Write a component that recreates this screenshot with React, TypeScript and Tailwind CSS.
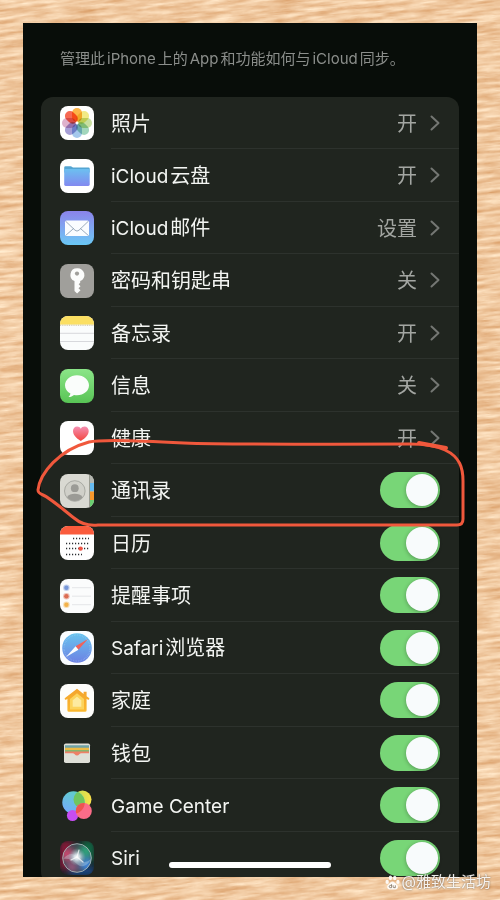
import { Fragment, useState } from 'react'
import type { ReactNode } from 'react'

interface Item {
  id: string
  label: string
  icon: ReactNode
  value?: string
}

function Svg({ children }: { children: ReactNode }) {
  return (
    <svg viewBox="0 0 34 34" className="size-full" aria-hidden="true">
      {children}
    </svg>
  )
}

function Tile({ className = '', children }: { className?: string; children: ReactNode }) {
  return <div className={`size-[34px] shrink-0 overflow-hidden rounded-lg ${className}`}>{children}</div>
}

const petals = ['#fdb548', '#f2ea86', '#c9dfa0', '#a2d6bc', '#a4c8ec', '#a79fd6', '#dfb2cc', '#f66a54']

function PhotosIcon() {
  return (
    <Tile className="bg-white">
      <Svg>
        <g className="isolate">
          {petals.map((color, i) => (
            <rect
              key={color}
              x="12"
              y="2"
              width="10"
              height="14"
              rx="5"
              fill={color}
              transform={`rotate(${i * 45} 17 17)`}
              className="mix-blend-multiply"
            />
          ))}
        </g>
        <circle cx="17" cy="17" r="1.4" fill="#fff" opacity=".85" />
      </Svg>
    </Tile>
  )
}

function DriveIcon() {
  return (
    <Tile className="bg-white">
      <Svg>
        <defs>
          <linearGradient id="folder" x1="0" y1="0" x2="0" y2="1">
            <stop offset="0" stopColor="#6cc0f0" />
            <stop offset="1" stopColor="#8289f0" />
          </linearGradient>
        </defs>
        <path d="M4.2 8.6q0-1.4 1.4-1.4h5q.8 0 1.3.6t1.3.6h15.3q1.2 0 1.2 1.2v4H4.2z" fill="#54a5d2" />
        <rect x="4.2" y="10" width="25.5" height="17" rx="1.4" fill="url(#folder)" />
      </Svg>
    </Tile>
  )
}

function MailIcon() {
  return (
    <Tile className="bg-linear-to-b from-[#8a83ea] to-[#69c8f5]">
      <Svg>
        <rect x="5" y="9.6" width="24" height="15.4" rx="1.6" fill="#fafcff" />
        <path
          d="M5.6 10.2 15 19.2q2 1.8 4 0l9.4-9M5.6 24.5l8.2-7.2M28.4 24.5l-8.2-7.2"
          fill="none"
          stroke="#8fa0b4"
          strokeWidth=".9"
        />
      </Svg>
    </Tile>
  )
}

function KeyIcon() {
  return (
    <Tile className="bg-[#a09f9b]">
      <Svg>
        <path
          d="M17 4.3a6.6 6.6 0 0 0-2.5 12.7v10l2.6 2.6 3.4-3.3-2-2 2-2.1-1.8-1.9 1.5-1.5V17A6.6 6.6 0 0 0 17 4.3z"
          fill="#fbfcfb"
        />
        <circle cx="17" cy="9.6" r="2.1" fill="#a09f9b" />
      </Svg>
    </Tile>
  )
}

function NotesIcon() {
  return (
    <Tile className="bg-[#fafcfc]">
      <Svg>
        <rect width="34" height="8.6" fill="#fbdf62" />
        <path d="M0 9.2h34" stroke="#c9bd98" strokeWidth="1" strokeDasharray="1 .8" />
        <path d="M0 17.3h34M0 25.5h34" stroke="#d2d4d8" strokeWidth=".9" />
      </Svg>
    </Tile>
  )
}

function MessagesIcon() {
  return (
    <Tile className="bg-linear-to-b from-[#8be588] to-[#58c455]">
      <Svg>
        <path
          d="M17 6.2c-6.8 0-12 4.5-12 10.1 0 3.6 2 6.5 5.4 8.3-.2 1.5-1 2.6-1.9 3.5 2.2-.1 4.1-.9 5.5-2.1 1 .2 2 .3 3 .3 6.8 0 12-4.4 12-10S23.8 6.2 17 6.2z"
          fill="#fafdfb"
        />
      </Svg>
    </Tile>
  )
}

function HealthIcon() {
  return (
    <Tile className="bg-white">
      <Svg>
        <defs>
          <linearGradient id="heart" x1="0" y1="0" x2="0" y2="1">
            <stop offset="0" stopColor="#f58fb2" />
            <stop offset="1" stopColor="#f2463f" />
          </linearGradient>
        </defs>
        <path
          d="M20.8 19.9C16 17.1 13 13.7 13 10c0-2.7 1.9-4.5 4.1-4.5 1.7 0 3 .9 3.7 2.3.7-1.4 2-2.3 3.7-2.3 2.3 0 4.2 1.8 4.2 4.5 0 3.7-3 7.1-7.9 9.9z"
          fill="url(#heart)"
        />
      </Svg>
    </Tile>
  )
}

function ContactsIcon() {
  return (
    <Tile className="bg-[#d9d9d2]">
      <Svg>
        <rect x="29" width="1" height="34" fill="#9a9c92" />
        <rect x="30" width="4" height="9" fill="#b5b7b0" />
        <rect x="30" y="9" width="4" height="8.5" fill="#66baf0" />
        <rect x="30" y="17.5" width="4" height="8.5" fill="#f7982d" />
        <rect x="30" y="26" width="4" height="8" fill="#6cd071" />
        <circle cx="14.8" cy="17" r="10.3" fill="#d0d0c9" stroke="#9d9e98" strokeWidth=".8" />
        <circle cx="14.8" cy="14.2" r="3.9" fill="#9b9b96" />
        <path d="M7 23.2c1.6-2.6 4.5-3.5 7.8-3.5s6.2.9 7.8 3.5a10 10 0 0 1-15.6 0z" fill="#9b9b96" />
      </Svg>
    </Tile>
  )
}

function CalendarIcon() {
  return (
    <Tile className="bg-white">
      <Svg>
        <rect width="34" height="8.5" fill="#fa5b3c" />
        <path
          d="M13 12.5h16M6 17.5h23M6 22.5h23M6 28.5h16"
          fill="none"
          stroke="#2b2e32"
          strokeWidth="1.3"
          strokeDasharray="1.2 1.8"
        />
        <circle cx="20.6" cy="22.6" r="2.2" fill="#ef5444" />
      </Svg>
    </Tile>
  )
}

function RemindersIcon() {
  return (
    <Tile className="bg-[#fbfcfc]">
      <Svg>
        <path d="M12 8.7h19M12 17.2h19M12 25.7h19" stroke="#dedfe2" strokeWidth=".8" />
        {[
          ['8.7', '#7797d8'],
          ['17.2', '#dc6c52'],
          ['25.7', '#f3b24a'],
        ].map(([cy, color]) => (
          <g key={color} fill={color}>
            <circle cx="6.4" cy={cy} r="3.3" opacity=".4" />
            <circle cx="6.4" cy={cy} r="2.2" />
          </g>
        ))}
      </Svg>
    </Tile>
  )
}

function SafariIcon() {
  return (
    <Tile className="bg-[#fafdff]">
      <Svg>
        <defs>
          <linearGradient id="compass" x1="0" y1="0" x2="0" y2="1">
            <stop offset="0" stopColor="#68c4ee" />
            <stop offset="1" stopColor="#6d82e4" />
          </linearGradient>
        </defs>
        <circle cx="17" cy="17" r="14.8" fill="url(#compass)" />
        <circle cx="17" cy="17" r="13" fill="none" stroke="#b9dcf7" strokeWidth="1.4" strokeDasharray=".4 1.3" opacity=".6" />
        <path d="M28 8 15.6 15.2l2.8 3.6z" fill="#f0625c" />
        <path d="M6 26l9.6-10.8 2.8 3.6z" fill="#fbfdff" />
      </Svg>
    </Tile>
  )
}

function HomeIcon() {
  return (
    <Tile className="bg-[#fdfdfb]">
      <Svg>
        <defs>
          <linearGradient id="house" x1="0" y1="0" x2="0" y2="1">
            <stop offset="0" stopColor="#f3a32e" />
            <stop offset="1" stopColor="#fbb92f" />
          </linearGradient>
        </defs>
        <path
          d="M17 4.8 5 14.1q-.8.8 0 1.4.7.5 1.4 0l1-.7v11.4q0 1.6 1.6 1.6h16q1.6 0 1.6-1.6V14.8l1 .7q.7.5 1.4 0 .8-.7 0-1.4l-2.4-1.9V7.8h-3v2.1z"
          fill="url(#house)"
        />
        <path d="M17 9.3 10 15v10.5h14V15z" fill="#fcd35c" />
        <path d="M17 12.7 12.7 16.3v6.4h8.6v-6.4z" fill="#fdeaa0" />
      </Svg>
    </Tile>
  )
}

function WalletIcon() {
  return (
    <Tile>
      <Svg>
        <rect x="4" y="7.5" width="26" height="19.5" rx="1.8" fill="#dfe0d8" />
        <path d="M5 9.2h24v2.8H5z" fill="#6fa3a6" />
        <path d="M5 11.8h24v2.4H5z" fill="#edbb45" />
        <path d="M5 14h24v2H5z" fill="#86b56f" />
        <path d="M5 15.6h24v1.6h-7.6q-1.4 0-2.1 1.1-.9 1.3-2.3 1.3t-2.3-1.3q-.7-1.1-2.1-1.1H5z" fill="#ee8067" />
      </Svg>
    </Tile>
  )
}

function GameCenterIcon() {
  return (
    <Tile>
      <Svg>
        <defs>
          <linearGradient id="bubble-blue" x1=".7" y1="0" x2=".3" y2="1">
            <stop offset="0" stopColor="#5fcfc8" />
            <stop offset="1" stopColor="#74aafc" />
          </linearGradient>
          <linearGradient id="bubble-yellow" x1="0" y1="0" x2="1" y2="0">
            <stop offset="0" stopColor="#b4dc52" />
            <stop offset="1" stopColor="#fbe14a" />
          </linearGradient>
          <clipPath id="bubble-overlap">
            <circle cx="13.5" cy="13.5" r="11.2" />
          </clipPath>
        </defs>
        <circle cx="22.5" cy="10.5" r="9" fill="url(#bubble-yellow)" />
        <circle cx="13.5" cy="13.5" r="11.2" fill="url(#bubble-blue)" />
        <circle cx="22.5" cy="10.5" r="9" fill="#70c55e" clipPath="url(#bubble-overlap)" />
        <circle cx="12.5" cy="26.5" r="5.6" fill="#c64df2" />
        <circle cx="23.8" cy="22" r="8" fill="#fb6c88" />
        <circle cx="23.8" cy="22" r="8" fill="#ee5450" clipPath="url(#bubble-overlap)" />
      </Svg>
    </Tile>
  )
}

function SiriIcon() {
  return (
    <Tile>
      <Svg>
        <defs>
          <radialGradient id="siri-core">
            <stop offset="0" stopColor="#ffffff" />
            <stop offset=".3" stopColor="#e4f0f6" stopOpacity=".85" />
            <stop offset="1" stopColor="#8fb9c8" stopOpacity="0" />
          </radialGradient>
          <filter id="siri-soft" x="-50%" y="-50%" width="200%" height="200%">
            <feGaussianBlur stdDeviation="3" />
          </filter>
          <clipPath id="siri-orb">
            <circle cx="17" cy="17" r="14.5" />
          </clipPath>
        </defs>
        <rect width="34" height="34" fill="#1d2326" />
        <g filter="url(#siri-soft)">
          <rect x="0" y="0" width="12" height="28" fill="#8b1338" />
          <rect x="22" y="0" width="12" height="20" fill="#0d6b45" />
          <rect x="10" y="26" width="24" height="8" fill="#124a8c" />
        </g>
        <g clipPath="url(#siri-orb)">
          <circle cx="17" cy="17" r="14.5" fill="#3a4650" />
          <g filter="url(#siri-soft)">
            <circle cx="7" cy="13" r="7" fill="#c9486f" />
            <circle cx="26" cy="10" r="7" fill="#2fa57c" />
            <circle cx="27" cy="24" r="7" fill="#4187dc" />
            <circle cx="12" cy="26" r="5" fill="#a85c88" />
          </g>
          <path d="M3 18c6-7 11-6 15-1s8 5 13 1c-4 8-10 9-14 5s-9-6-14-5z" fill="#c9e0e8" opacity=".35" />
        </g>
        <circle cx="17" cy="16" r="9" fill="url(#siri-core)" />
        <path d="M17 16l6 5M17 16l-6 3M17 16l2-7" stroke="#fff" strokeWidth="1.2" strokeLinecap="round" opacity=".7" />
        <circle cx="17" cy="17" r="14.3" fill="none" stroke="#a7b4b4" strokeWidth=".9" />
      </Svg>
    </Tile>
  )
}

const items: Item[] = [
  { id: 'photos', label: '照片', icon: <PhotosIcon />, value: '开' },
  { id: 'drive', label: 'iCloud云盘', icon: <DriveIcon />, value: '开' },
  { id: 'mail', label: 'iCloud邮件', icon: <MailIcon />, value: '设置' },
  { id: 'keychain', label: '密码和钥匙串', icon: <KeyIcon />, value: '关' },
  { id: 'notes', label: '备忘录', icon: <NotesIcon />, value: '开' },
  { id: 'messages', label: '信息', icon: <MessagesIcon />, value: '关' },
  { id: 'health', label: '健康', icon: <HealthIcon />, value: '开' },
  { id: 'contacts', label: '通讯录', icon: <ContactsIcon /> },
  { id: 'calendar', label: '日历', icon: <CalendarIcon /> },
  { id: 'reminders', label: '提醒事项', icon: <RemindersIcon /> },
  { id: 'safari', label: 'Safari浏览器', icon: <SafariIcon /> },
  { id: 'home', label: '家庭', icon: <HomeIcon /> },
  { id: 'wallet', label: '钱包', icon: <WalletIcon /> },
  { id: 'gamecenter', label: 'Game Center', icon: <GameCenterIcon /> },
  { id: 'siri', label: 'Siri', icon: <SiriIcon /> },
]

// Sets Latin words apart from the Chinese characters around them
function MixedText({ text, latinClass }: { text: string; latinClass: string }) {
  return text
    .split(/([A-Za-z][A-Za-z ]*)/)
    .filter(Boolean)
    .map((part, i) =>
      /^[A-Za-z]/.test(part) ? (
        <span key={i} className={latinClass}>
          {part}
        </span>
      ) : (
        <Fragment key={i}>{part}</Fragment>
      ),
    )
}

const rowClass = 'flex h-full w-full items-center gap-[17px] pl-[19px] text-left'
const bodyClass = 'flex h-full flex-1 items-center border-b border-[#2d322d] pr-[19px]'

function RowLabel({ text }: { text: string }) {
  return (
    <span className="flex-1 pt-[2px] text-[#f3f5f2]">
      <MixedText text={text} latinClass="mr-[2px] text-[19px]" />
    </span>
  )
}

function LinkRow({ item }: { item: Item }) {
  return (
    <button type="button" className={rowClass}>
      {item.icon}
      <span className={bodyClass}>
        <RowLabel text={item.label} />
        <span className="pt-[2px] text-[#a3a6a2]">{item.value}</span>
        <svg viewBox="0 0 10 16" className="ml-[13px] h-4 w-[10px]" fill="none" aria-hidden="true">
          <path d="M1.5 1.5 8.5 8l-7 6.5" stroke="#747773" strokeWidth="2" strokeLinecap="round" strokeLinejoin="round" />
        </svg>
      </span>
    </button>
  )
}

function SwitchRow({ item }: { item: Item }) {
  const [on, setOn] = useState(true)

  return (
    <label className={rowClass}>
      {item.icon}
      <span className={bodyClass}>
        <RowLabel text={item.label} />
        <input
          type="checkbox"
          role="switch"
          checked={on}
          onChange={e => setOn(e.target.checked)}
          className="flex h-9 w-[60px] shrink-0 appearance-none items-center rounded-full bg-[#3a3f3a] px-[2px] before:size-8 before:rounded-full before:bg-[#f8fbfc] before:shadow-[0_1px_4px_rgba(0,0,0,0.3)] checked:justify-end checked:bg-[#78d677]"
        />
      </span>
    </label>
  )
}

// Wood desk behind the phone
function Wood() {
  return (
    <svg className="absolute inset-0 size-full" aria-hidden="true">
      <defs>
        <filter id="grain" x="0" y="0" width="100%" height="100%" colorInterpolationFilters="sRGB">
          <feTurbulence type="fractalNoise" baseFrequency="0.03 0.24" numOctaves="5" seed="11" />
          <feColorMatrix
            values="0.2 0 0 0 0.84
                    0.38 0 0 0 0.595
                    0.5 0 0 0 0.375
                    0 0 0 0 1"
          />
        </filter>
      </defs>
      <rect x="-30%" y="-20%" width="160%" height="140%" filter="url(#grain)" transform="rotate(-5)" />
    </svg>
  )
}

// Hand-drawn loop around the contacts row
function MarkerLoop() {
  return (
    <svg
      viewBox="0 0 454 100"
      fill="none"
      stroke="#f0583c"
      strokeWidth="3"
      strokeLinecap="round"
      strokeLinejoin="round"
      className="pointer-events-none absolute top-[411px] left-0 w-full"
      aria-hidden="true"
    >
      <path d="M15 56C17 39 36 16 66 8c12-3 60-1 95 1 50 2 120 1 226 1 17 0 27 2 35 6 15 7 18 18 18 31v38q0 6-6 6H75c-10 1-17-1-24-7C37 73 27 64 20 61q-5-2-5-5z" />
      <path d="M396 9l27 5" strokeWidth="4" />
    </svg>
  )
}

function Watermark() {
  return (
    <div className="absolute right-[9px] bottom-2 flex items-center gap-[2px] text-[15px] leading-5 text-white/90 [text-shadow:0_0_2px_rgba(60,50,40,0.8)]">
      <svg viewBox="0 0 16 16" className="size-[15px]" fill="currentColor" aria-hidden="true">
        <ellipse cx="2.3" cy="7.4" rx="1.8" ry="2.3" />
        <ellipse cx="5.8" cy="3" rx="1.8" ry="2.5" />
        <ellipse cx="10.4" cy="3.2" rx="1.8" ry="2.5" />
        <ellipse cx="13.8" cy="7.4" rx="1.8" ry="2.3" />
        <path d="M8 6.8c-2 0-2.6 1.7-4 3C2.8 10.9 2 12 2.4 13.7c.5 2 2.5 2 5.6 1.7 3.1.3 5.2.3 5.7-1.7.4-1.7-.5-2.8-1.7-3.9-1.4-1.3-2-3-4-3z" />
        <path d="M7 9.8v3.7H5.5q-1-.2-1-1.2t1-1.2H7M8.7 11v1.7q0 .8.8.8H11V11" fill="none" stroke="#7a6a58" strokeWidth=".8" />
      </svg>
      <span>@雅致生活坊</span>
    </div>
  )
}

export default function App() {
  return (
    <div className="relative flex h-screen flex-col overflow-hidden bg-[#eec59b] p-[23px] font-['Inter','Noto_Sans_CJK_SC',sans-serif]">
      <Wood />
      <main className="relative min-h-0 flex-1 overflow-hidden bg-[#080d09]">
        <p className="px-[37px] pt-[25px] pb-[27px] text-[15px] leading-[22px] text-[#8b8e8b]">
          <MixedText text="管理此iPhone上的App和功能如何与iCloud同步。" latinClass="mx-[2px]" />
        </p>
        <ul className="mx-[18px] rounded-xl bg-[#20251f] text-xl">
          {items.map(item => (
            <li key={item.id} className="odd:h-[52px] even:h-[53px]">
              {item.value ? <LinkRow item={item} /> : <SwitchRow item={item} />}
            </li>
          ))}
        </ul>
        <MarkerLoop />
        <div className="absolute bottom-[9px] left-1/2 h-[6px] w-[162px] -translate-x-1/2 rounded-full bg-white" />
      </main>
      <Watermark />
    </div>
  )
}
